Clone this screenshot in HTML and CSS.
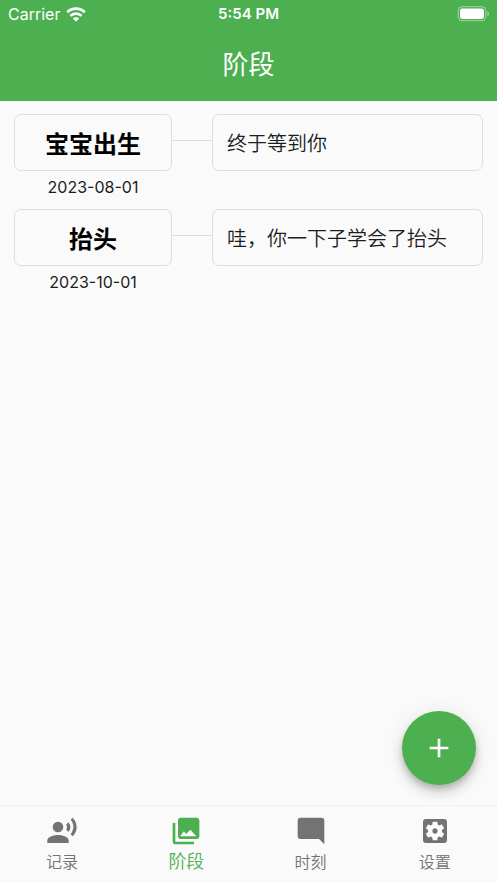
FILE: index.html
```html
<!DOCTYPE html>
<html lang="zh-CN">
<head>
<meta charset="utf-8">
<meta name="viewport" content="width=device-width, initial-scale=1">
<title>阶段</title>
<link rel="stylesheet" href="styles.css">
</head>
<body>
<header class="app-bar">
  <div class="status">
    <div class="carrier">
      <span>Carrier</span>
      <svg class="wifi" viewBox="0 0 20 15" aria-hidden="true">
        <path d="M1.2 5.3a12.6 12.6 0 0 1 17.6 0" stroke-width="2.8"/>
        <path d="M4.4 8.9a8 8 0 0 1 11.2 0" stroke-width="2.6"/>
        <path class="solid" d="M10 14.8 6.8 11.6a4.6 4.6 0 0 1 6.4 0z"/>
      </svg>
    </div>
    <span class="clock">5:54 PM</span>
    <svg class="battery" viewBox="0 0 32 16" aria-hidden="true">
      <rect class="shell" x="1.2" y=".7" width="27.6" height="14" rx="4"/>
      <rect x="3" y="2.5" width="24" height="10.4" rx="2.4"/>
      <path class="cap" d="M30.4 5.2c2 .8 2 4.2 0 5z"/>
    </svg>
  </div>
  <h1 class="title">阶段</h1>
</header>
<main class="stages">
  <article class="stage">
    <div class="card name">宝宝出生</div>
    <div class="link"></div>
    <div class="card note">终于等到你</div>
    <time class="date" datetime="2023-08-01">2023-08-01</time>
  </article>
  <article class="stage">
    <div class="card name">抬头</div>
    <div class="link"></div>
    <div class="card note">哇，你一下子学会了抬头</div>
    <time class="date" datetime="2023-10-01">2023-10-01</time>
  </article>
</main>
<button class="fab" type="button" aria-label="添加">
  <svg class="icon" viewBox="0 0 24 24" aria-hidden="true"><path d="M19 13h-6v6h-2v-6H5v-2h6V5h2v6h6v2z"/></svg>
</button>
<nav class="tabs">
  <a class="tab" href="#record">
    <svg class="icon" viewBox="0 0 24 24" aria-hidden="true"><circle cx="9" cy="9" r="4"/><path d="M9 15c-2.67 0-8 1.34-8 4v2h16v-2c0-2.66-5.33-4-8-4zm7.76-9.64l-1.68 1.69c.84 1.18.84 2.71 0 3.89l1.68 1.69c2.02-2.02 2.02-5.07 0-7.27zM20.07 2l-1.63 1.63c2.77 3.02 2.77 7.56 0 10.74L20.07 16c3.9-3.89 3.91-9.95 0-14z"/></svg>
    <span>记录</span>
  </a>
  <a class="tab active" href="#stage" aria-current="page">
    <svg class="icon" viewBox="0 0 24 24" aria-hidden="true"><path d="M22 16V4c0-1.1-.9-2-2-2H8c-1.1 0-2 .9-2 2v12c0 1.1.9 2 2 2h12c1.1 0 2-.9 2-2zM10.4 12.2l1.7 2.1L15.2 11l4.6 5H7.6zM2 6v14c0 1.1.9 2 2 2h14v-2H4V6H2z"/></svg>
    <span>阶段</span>
  </a>
  <a class="tab" href="#moment">
    <svg class="icon" viewBox="0 0 24 24" aria-hidden="true"><path d="M21.99 4c0-1.1-.89-2-1.99-2H4c-1.1 0-2 .9-2 2v12c0 1.1.9 2 2 2h14l4 4-.01-18z"/></svg>
    <span>时刻</span>
  </a>
  <a class="tab" href="#settings">
    <svg class="icon" viewBox="0 0 24 24" aria-hidden="true"><path d="M12 10c-1.1 0-2 .9-2 2s.9 2 2 2 2-.9 2-2-.9-2-2-2zm7-7H5c-1.11 0-2 .9-2 2v14c0 1.1.89 2 2 2h14c1.11 0 2-.9 2-2V5c0-1.1-.89-2-2-2zm-1.75 9c0 .23-.02.46-.05.68l1.48 1.16c.13.11.17.3.08.45l-1.4 2.42c-.09.15-.27.21-.43.15l-1.74-.7c-.36.28-.76.51-1.18.69l-.26 1.85c-.03.17-.18.3-.35.3h-2.8c-.17 0-.32-.13-.35-.29l-.26-1.85c-.43-.18-.82-.41-1.18-.69l-1.74.7c-.16.06-.34 0-.43-.15l-1.4-2.42c-.09-.15-.05-.34.08-.45l1.48-1.16c-.03-.23-.05-.46-.05-.69 0-.23.02-.46.05-.68l-1.48-1.16c-.13-.11-.17-.3-.08-.45l1.4-2.42c.09-.15.27-.21.43-.15l1.74.7c.36-.28.76-.51 1.18-.69l.26-1.85c.03-.17.18-.3.35-.3h2.8c.17 0 .32.13.35.29l.26 1.85c.43.18.82.41 1.18.69l1.74-.7c.16-.06.34 0 .43.15l1.4 2.42c.09.15.05.34-.08.45l-1.48 1.16c.03.23.05.46.05.69z"/></svg>
    <span>设置</span>
  </a>
</nav>
</body>
</html>
```
FILE: styles.css
```css
* { box-sizing: border-box; }

body {
  margin: 0;
  min-height: 100vh;
  display: flex;
  flex-direction: column;
  background: #fafafa;
  color: #1c1c1c;
  font-family: Inter, "Noto Sans CJK SC", sans-serif;
}

.app-bar {
  background: #4caf50;
  color: #fff;
  padding-bottom: 14px;
}

.status {
  display: grid;
  grid-template-columns: 1fr auto 1fr;
  align-items: center;
  height: 28px;
  padding: 0 8px;
  font-size: 16px;
  line-height: 20px;
}

.carrier {
  display: flex;
  align-items: center;
  gap: 6px;
}

.wifi {
  width: 20px;
  height: 15px;
  fill: none;
  stroke: #fff;
}

.wifi .solid { fill: #fff; stroke: none; }

.clock { font-size: 15px; font-weight: 600; }

.battery {
  justify-self: end;
  width: 32px;
  height: 16px;
  fill: #fff;
}

.battery .shell { fill: none; stroke: #fff; opacity: .5; }
.battery .cap { opacity: .5; }

.title {
  margin: 0;
  padding-top: 15px;
  font-size: 26px;
  line-height: 44px;
  font-weight: 400;
  text-align: center;
}

.stages {
  flex: 1;
  padding: 13px 14px;
}

.stage {
  display: grid;
  grid-template-columns: 7fr 40px 12fr;
  grid-template-rows: 57px 38px;
}

.card {
  display: flex;
  align-items: center;
  border: 1px solid #ddd;
  border-radius: 7px;
}

.name {
  justify-content: center;
  color: #000;
  font-size: 24px;
  font-weight: 700;
}

.link {
  height: 27px;
  border-bottom: 1px solid #ddd;
}

.note {
  padding: 0 14px;
  font-size: 20px;
  font-weight: 350;
}

.date {
  font-size: 16px;
  line-height: 32px;
  text-align: center;
}

.icon {
  width: 32px;
  height: 32px;
  fill: currentColor;
  fill-rule: evenodd;
}

.fab {
  position: fixed;
  right: 21px;
  bottom: 98px;
  display: grid;
  place-items: center;
  width: 74px;
  height: 74px;
  padding: 0;
  border: 0;
  border-radius: 50%;
  background: #4caf50;
  color: #fff;
  box-shadow: 0 4px 7px -1px rgba(0, 0, 0, .2), 0 8px 13px rgba(0, 0, 0, .14), 0 1px 24px rgba(0, 0, 0, .08);
}

.tabs {
  position: sticky;
  bottom: 0;
  display: grid;
  grid-template-columns: repeat(4, 1fr);
  height: 78px;
  padding-top: 9px;
  border-top: 1px solid #f0f0f0;
  background: #fafafa;
}

.tab {
  display: flex;
  flex-direction: column;
  align-items: center;
  color: #737373;
  font-size: 16px;
  line-height: 30px;
  font-weight: 350;
  text-decoration: none;
}

.active {
  color: #4caf50;
  font-size: 18px;
}
```
